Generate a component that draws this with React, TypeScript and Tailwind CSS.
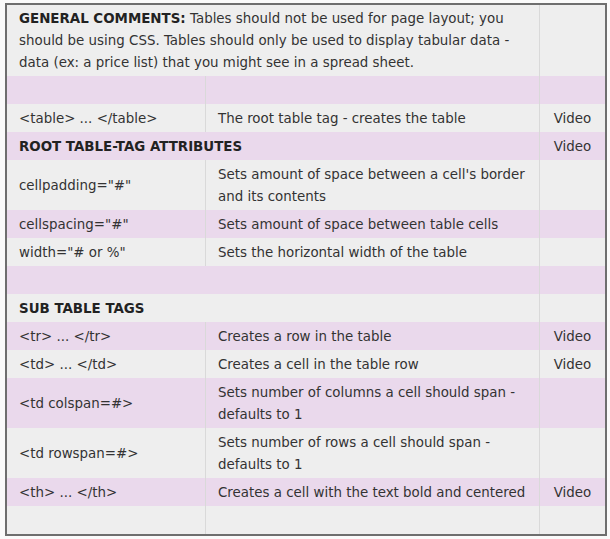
type Row = {
  a?: string
  b?: string
  video?: boolean
  tone: 'grey' | 'purple'
  heading?: string
  span?: boolean
}

const rows: Row[] = [
  { tone: 'purple' },
  { a: '<table> ... </table>', b: 'The root table tag - creates the table', video: true, tone: 'grey' },
  { heading: 'ROOT TABLE-TAG ATTRIBUTES', video: true, tone: 'purple' },
  { a: 'cellpadding="#"', b: "Sets amount of space between a cell's border and its contents", tone: 'grey' },
  { a: 'cellspacing="#"', b: 'Sets amount of space between table cells', tone: 'purple' },
  { a: 'width="# or %"', b: 'Sets the horizontal width of the table', tone: 'grey' },
  { tone: 'purple', span: true },
  { heading: 'SUB TABLE TAGS', tone: 'grey' },
  { a: '<tr> ... </tr>', b: 'Creates a row in the table', video: true, tone: 'purple' },
  { a: '<td> ... </td>', b: 'Creates a cell in the table row', video: true, tone: 'grey' },
  { a: '<td colspan=#>', b: 'Sets number of columns a cell should span - defaults to 1', tone: 'purple' },
  { a: '<td rowspan=#>', b: 'Sets number of rows a cell should span - defaults to 1', tone: 'grey' },
  { a: '<th> ... </th>', b: 'Creates a cell with the text bold and centered', video: true, tone: 'purple' },
  { tone: 'grey' },
]

const cell = 'px-3 pt-[4px] pb-[2px] align-middle leading-[22px]'
const divider = 'border-r border-[#d9d9d9]'

export default function App() {
  return (
    <div className="min-h-screen bg-[#fafafa] pt-[3px] pl-[5px]">
      <table
        className="w-[602px] table-fixed border-separate border-spacing-0 border-2 border-[#6e6e6e] bg-[#eeeeee] text-[13.4px] text-[#333333]"
        style={{ fontFamily: '"DejaVu Sans", Verdana, sans-serif' }}
      >
        <colgroup>
          <col className="w-[199px]" />
          <col className="w-[334px]" />
          <col className="w-[65px]" />
        </colgroup>
        <tbody>
          <tr>
            <td colSpan={2} className={`px-3 pt-[3px] pb-[2px] align-middle leading-[22px] ${divider}`}>
              <b className="text-[#222222]">GENERAL COMMENTS:</b> Tables should not be used for page layout; you
              should be using CSS. Tables should only be used to display tabular data - data (ex: a price list)
              that you might see in a spread sheet.
            </td>
            <td className={cell}></td>
          </tr>
          {rows.map((r, i) => {
            const bg = r.tone === 'purple' ? 'bg-[#ead9ec]' : 'bg-[#eeeeee]'
            return (
              <tr key={i} className={bg}>
                {r.heading || r.span ? (
                  <td colSpan={2} className={`${cell} ${divider} h-[28px] font-bold text-[#222222]`}>
                    {r.heading}
                  </td>
                ) : (
                  <>
                    <td className={`${cell} ${divider} h-[28px]`}>{r.a}</td>
                    <td className={`${cell} ${divider}`}>{r.b}</td>
                  </>
                )}
                <td className={`${cell} text-center`}>{r.video ? 'Video' : ''}</td>
              </tr>
            )
          })}
        </tbody>
      </table>
    </div>
  )
}
